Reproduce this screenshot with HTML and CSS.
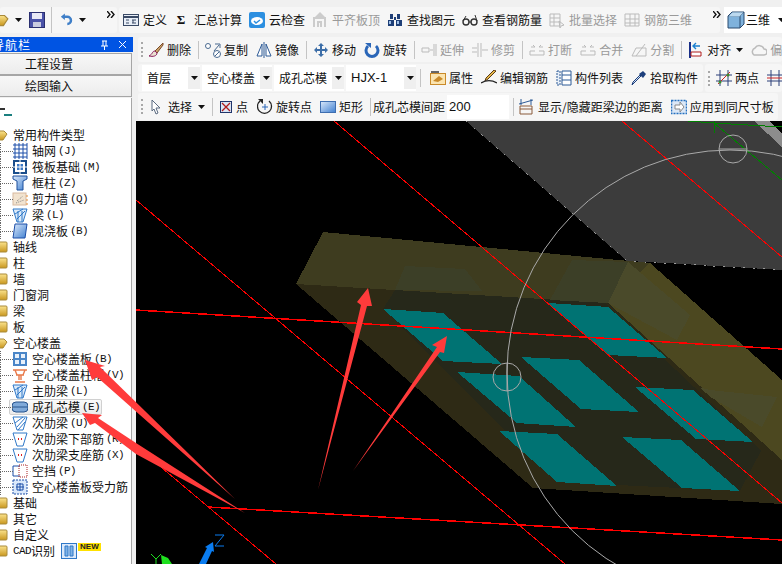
FILE: index.html
```html
<!DOCTYPE html>
<html lang="zh">
<head>
<meta charset="utf-8">
<title>绘图输入</title>
<link rel="stylesheet" href="styles.css">
</head>
<body>
<svg class="defs" aria-hidden="true">
  <defs>
    <linearGradient id="gold" x1="0" y1="0" x2="0" y2="1"><stop offset="0" stop-color="#fbe38c"/><stop offset="1" stop-color="#c9971f"/></linearGradient>
    <linearGradient id="blue" x1="0" y1="0" x2="1" y2="1"><stop offset="0" stop-color="#dbe9fb"/><stop offset="1" stop-color="#3f7fd0"/></linearGradient>
    <symbol id="grid" viewBox="0 0 16 16"><path d="M1 2h14M1 6h14M1 10h14M1 14h14M3 0v16M7 0v16M11 0v16M15 0v16" stroke="#1d4fa8" fill="none"/></symbol>
    <symbol id="raft" viewBox="0 0 16 16"><rect x="1" y="1" width="14" height="14" fill="#1a4e8c"/><rect x="3" y="3" width="10" height="10" fill="#fff"/><rect x="5" y="5" width="6" height="6" fill="#3b78c4"/><path d="M1 8h14M8 1v14" stroke="#fff"/></symbol>
    <symbol id="col" viewBox="0 0 16 16"><path d="M1 1h14v3l-4 2v9H5V6L1 4z" fill="url(#blue)" stroke="#1c4f9c"/></symbol>
    <symbol id="wall" viewBox="0 0 16 16"><rect x="1" y="2" width="13" height="12" fill="#f2e3cf" stroke="#d7b9a0"/><path d="M5 10l6-5M4 12l8-3" stroke="#888" stroke-dasharray="1 1"/><path d="M15 4v2M15 8v2M15 12v2" stroke="#e58a2e"/></symbol>
    <symbol id="beam" viewBox="0 0 16 16"><path d="M1 2h14l-4 13H5z" fill="#dcebfa" stroke="#2f78c8"/><path d="M3 7l8-5M5 12l8-8M6 4v11M10 4v11" stroke="#2f78c8"/></symbol>
    <symbol id="slab" viewBox="0 0 16 16"><path d="M3 1h12l-2 14H1z" fill="url(#blue)" stroke="#1d4fa8"/></symbol>
    <symbol id="vslab" viewBox="0 0 16 16"><rect x="1" y="1" width="14" height="14" fill="#4a86c8"/><path d="M3 3h4v4H3zM9 3h4v4H9zM3 9h4v4H3zM9 9h4v4H9z" fill="#e8f1fb"/></symbol>
    <symbol id="cap" viewBox="0 0 16 16"><path d="M1 3h14M4 8h8M7 8v5M9 8v5M3 15h10M3 3l2 5M13 3l-2 5" stroke="#e8794a" fill="none" stroke-width="1.4"/></symbol>
    <symbol id="core" viewBox="0 0 16 16"><rect x="0" y="3" width="16" height="10" rx="4" fill="#7fa9d9" stroke="#27548e"/><path d="M0 8h16" stroke="#27548e"/></symbol>
    <symbol id="sub" viewBox="0 0 16 16"><path d="M1 2h14l-4 13H5z" fill="#fff" stroke="#2f78c8"/><path d="M3 8l8-6M5 12l8-9M6 15l7-8" stroke="#2f78c8"/></symbol>
    <symbol id="subred" viewBox="0 0 16 16"><path d="M1 2h14l-4 13H5z" fill="#fff" stroke="#2f78c8"/><path d="M6 8h1M9 8h1" stroke="#d22" stroke-width="2"/></symbol>
    <symbol id="gap" viewBox="0 0 16 16"><path d="M8 3H1v10h7" fill="none" stroke="#1d4fa8"/><rect x="7" y="2" width="8" height="12" fill="none" stroke="#a22" stroke-dasharray="1 1"/></symbol>
    <symbol id="force" viewBox="0 0 16 16"><rect x="1" y="1" width="14" height="14" fill="#dbe9fb" stroke="#1d4fa8" stroke-dasharray="2 1"/><path d="M8 4v8M4 8h8M5 5h6v6H5z" stroke="#1d4fa8" fill="none"/></symbol>
    <symbol id="folder" viewBox="0 0 8 12"><rect x="-4" y="1" width="11" height="10" rx="1" fill="url(#gold)" stroke="#a98a3a"/></symbol>
    <symbol id="open" viewBox="0 0 8 12"><path d="M-4 2h8l3 3-4 6h-7z" fill="url(#gold)" stroke="#a98a3a"/></symbol>
    <symbol id="caret" viewBox="0 0 7 4"><path d="M0 0h7L3.500 4z" fill="#111"/></symbol>
    <symbol id="more" viewBox="0 0 9 7"><path d="M0 0l3 3.500-3 3.500M4 0l3 3.500-3 3.500" fill="none" stroke="#111" stroke-width="1.400"/></symbol>
    <symbol id="define" viewBox="0 0 16 16"><rect x=".5" y="2.500" width="15" height="11" fill="#e8eef7" stroke="#3a4a66"/><path d="M.5 5h15" stroke="#3a4a66" stroke-width="2"/><path d="M3 8h3M3 11h3M9 8h4M9 11h4M10 8v3" stroke="#3a4a66"/></symbol>
    <symbol id="cloud" viewBox="0 0 16 16"><rect width="16" height="16" rx="2" fill="#2c8fe0"/><ellipse cx="8" cy="9" rx="6" ry="4" fill="#fff"/><path d="M5 9l2 2 4-3" stroke="#2c8fe0" fill="none" stroke-width="1.500"/></symbol>
    <symbol id="align" viewBox="0 0 16 16"><path d="M8 0L3 5h10z" fill="#ccc"/><path d="M2 15V6h11v9M6 15v-5h3v5" fill="none" stroke="#ccc" stroke-width="2"/></symbol>
    <symbol id="find" viewBox="0 0 16 16"><path d="M3 2h3v5H3zM10 2h3v5h-3zM1 8h6v6H1zM9 8h6v6H9zM7 5h2v3H7z" fill="#1f3f77"/><path d="M2 9h2v3H2zM10 9h2v3h-2z" fill="#9fc0e8"/></symbol>
    <symbol id="glass" viewBox="0 0 16 16"><circle cx="4" cy="10" r="3" fill="none" stroke="#333" stroke-width="1.400"/><circle cx="12" cy="10" r="3" fill="none" stroke="#333" stroke-width="1.400"/><path d="M7 10h2M1 9l3-5M15 9l-2-6" stroke="#333"/></symbol>
    <symbol id="batch" viewBox="0 0 16 16"><path d="M1 2h10v12H1zM1 6h10M1 10h10M5 2v12M10 9l5 4-3 1-1 2z" fill="none" stroke="#bbb"/></symbol>
    <symbol id="rebar3d" viewBox="0 0 16 16"><path d="M1 2h14v12H1zM6 2v12M11 2v12M1 7h14M1 11h14" fill="none" stroke="#bbb"/></symbol>
    <symbol id="cube" viewBox="0 0 18 18"><path d="M1 5l4-4h12v12l-4 4H1z" fill="#7fb2dc" stroke="#2b4a6f"/><path d="M1 5h12v12M13 5l4-4" fill="none" stroke="#2b4a6f"/><path d="M1.500 5.500l4-4h11l-4 4z" fill="#bcd9ef"/></symbol>
    <symbol id="brush" viewBox="0 0 16 16"><path d="M15 1L7 9l2 2 6-8z" fill="#c9a26a" stroke="#7a4b2a"/><path d="M7 9c-3 0-2 3-6 5 4 1 8 0 8-3z" fill="#e9e0d0" stroke="#8d1f5e"/></symbol>
    <symbol id="copy" viewBox="0 0 16 16"><circle cx="3" cy="4" r="2.500" fill="#fff" stroke="#4a6a90"/><circle cx="12" cy="12" r="3.500" fill="#fff" stroke="#4a6a90"/><path d="M10 2h5v4M9 9l5-6M10 14l4-4" fill="none" stroke="#4a6a90"/></symbol>
    <symbol id="mirror" viewBox="0 0 16 16"><path d="M6 2L1 14h5zM10 2l5 12h-5z" fill="#fff" stroke="#2d5a96"/><path d="M8 0v16" stroke="#2d5a96"/></symbol>
    <symbol id="move" viewBox="0 0 16 16"><path d="M8 1l3 3H9v3h3V5l3 3-3 3V9H9v3h2l-3 3-3-3h2V9H4v2L1 8l3-3v2h3V4H5z" fill="#3d6ea8"/></symbol>
    <symbol id="rotate" viewBox="0 0 16 16"><path d="M4 4a6 6 0 1 0 8 0" fill="none" stroke="#2a66b8" stroke-width="3"/><path d="M1 1h6v5z" fill="#2a66b8"/></symbol>
    <symbol id="extend" viewBox="0 0 16 16"><path d="M1 6h7v4H1zM13 2v12M15 2v12M9 8h3" fill="none" stroke="#bbb"/></symbol>
    <symbol id="trim" viewBox="0 0 16 16"><path d="M6 1v14M9 1v14M0 6h5M0 10h5M10 8h6" fill="none" stroke="#bbb"/></symbol>
    <symbol id="brk" viewBox="0 0 16 16"><path d="M1 13h14M1 9h5M10 9h5M1 9v4M15 9v4M2 5h4l-2-2M14 5h-4l2-2" fill="none" stroke="#bbb"/></symbol>
    <symbol id="split" viewBox="0 0 16 16"><path d="M1 14l4-8h10v8zM5 14l9-12" fill="none" stroke="#bbb"/></symbol>
    <symbol id="alignr" viewBox="0 0 16 16"><path d="M2 0v16" stroke="#1a2f88" stroke-width="2"/><path d="M3 14h10v-4H3z" fill="#fff" stroke="#b01c1c"/><path d="M12 4H5m3-3L5 4l3 3" fill="none" stroke="#1a7fd0" stroke-width="1.400"/></symbol>
    <symbol id="offset" viewBox="0 0 16 16"><path d="M3 13a4 4 0 0 1 1-7 5 5 0 0 1 9 1 3 3 0 0 1 0 6z" fill="none" stroke="#bbb" stroke-width="1.500"/></symbol>
    <symbol id="prop" viewBox="0 0 16 16"><rect x=".5" y="3.500" width="15" height="11" fill="#fbe4b0" stroke="#c98a2a"/><path d="M1 1h8v2H1z" fill="#666"/><path d="M3 11l6-5 4 3-5 3z" fill="#c98a2a"/></symbol>
    <symbol id="editbar" viewBox="0 0 16 16"><path d="M15 1l-8 8-3 2 1-3 8-8z" fill="#e6b84a" stroke="#5a3a16"/><path d="M0 13c5-3 11-3 16 0" fill="none" stroke="#222" stroke-width="1.400"/></symbol>
    <symbol id="list" viewBox="0 0 16 16"><path d="M1 1h3v14H1z" fill="#e6eef8" stroke="#2d5a96" stroke-dasharray="2 1"/><path d="M6 1h9v14H6zM6 5h9M6 10h9" fill="#fff" stroke="#2d5a96"/></symbol>
    <symbol id="picker" viewBox="0 0 16 16"><path d="M10 6L3 13l-2 2 1-3 7-7z" fill="#cfe0f5" stroke="#1d3f7c"/><path d="M8 4l4 4 3-4-3-3z" fill="#1d3f7c"/></symbol>
    <symbol id="twopt" viewBox="0 0 16 16"><path d="M4 0v16M12 0v16M0 5h16M0 11h16" stroke="#2a3f78" fill="none"/><path d="M2 14L14 2" stroke="#c22"/><circle cx="4" cy="12" r="1.500" fill="#3c8c2c"/><circle cx="12" cy="5" r="1.500" fill="#3c8c2c"/></symbol>
    <symbol id="rows" viewBox="0 0 16 16"><path d="M4 0v16M12 0v16M0 5h16M0 11h16" stroke="#2a3f78" fill="none"/><path d="M0 8h16" stroke="#c22"/></symbol>
    <symbol id="cursor" viewBox="0 0 10 16"><path d="M1 1l8 8H5l2 5-2 1-2-5-2 2z" fill="#fff" stroke="#5a6a80"/></symbol>
    <symbol id="point" viewBox="0 0 12 12"><rect x=".5" y=".5" width="11" height="11" fill="#dce6f5" stroke="#20356b"/><path d="M2 2l8 8M10 2l-8 8" stroke="#b01c1c" stroke-width="1.300"/></symbol>
    <symbol id="rotpt" viewBox="0 0 16 16"><path d="M3 2a7 7 0 1 0 9 0" fill="none" stroke="#222" stroke-width="1.300"/><path d="M1 0h5v5z" fill="#222"/><path d="M8 5v6M5 8h6" stroke="#2a66b8"/></symbol>
    <symbol id="rect" viewBox="0 0 16 16"><rect x=".5" y="2.500" width="15" height="11" fill="url(#blue)" stroke="#3f6eb0"/></symbol>
    <symbol id="dist" viewBox="0 0 16 16"><path d="M2 7h12v8H2zM2 10h12" fill="none" stroke="#8a5a3a"/><path d="M1 5L15 1M3 0v6M13 0v6" stroke="#2d5a96" fill="none"/></symbol>
    <symbol id="apply" viewBox="0 0 16 16"><rect x=".5" y="1.500" width="15" height="13" fill="#dce8f7" stroke="#2470c0" stroke-width="1.500" stroke-dasharray="2 1"/><path d="M4 6h5V3l4 5-4 5v-3H4z" fill="#fff" stroke="#888"/></symbol>
    <symbol id="pin" viewBox="0 0 9 10"><path d="M2 1h5M3 1v5M6 1v5M1 6h7M4.500 6v4" stroke="#fff" fill="none"/></symbol>
    <symbol id="close" viewBox="0 0 9 9"><path d="M1 1l7 7M8 1L1 8" stroke="#fff"/></symbol>
    <symbol id="cadi" viewBox="0 0 16 16"><rect x=".5" y=".5" width="15" height="15" fill="#dbe9fb" stroke="#2f78c8"/><path d="M4 3h3v10H4zM9 3h3v10H9z" fill="#7fb2e6" stroke="#2f78c8"/></symbol>
  </defs>
</svg>

<header class="topbar">
  <div class="bar bar-quick">
    <svg class="i i-file"><use href="#open"/></svg>
    <svg class="caret"><use href="#caret"/></svg>
    <svg class="i i-save" viewBox="0 0 16 16"><rect x=".5" y=".5" width="15" height="15" fill="#4a52a8" stroke="#2a2f70"/><rect x="3" y="1" width="10" height="6" fill="#e8e8f5"/><rect x="4" y="10" width="8" height="5" fill="#c9cbe0"/></svg>
    <span class="sep"></span>
    <svg class="i i-undo" viewBox="0 0 16 16"><path d="M4 4h5a4 4 0 0 1 0 9" fill="none" stroke="#3f7fc8" stroke-width="3"/><path d="M6 0v8L1 4z" fill="#3f7fc8"/></svg>
    <svg class="caret caret-undo"><use href="#caret"/></svg>
    <svg class="more more-quick"><use href="#more"/></svg>
  </div>
  <div class="bar bar-main">
    <span class="tool"><svg class="i"><use href="#define"/></svg>定义</span>
    <span class="tool tool-sigma"><b class="sigma">Σ</b>汇总计算</span>
    <span class="tool"><svg class="i"><use href="#cloud"/></svg>云检查</span>
    <span class="tool off"><svg class="i"><use href="#align"/></svg>平齐板顶</span>
    <span class="tool"><svg class="i"><use href="#find"/></svg>查找图元</span>
    <span class="tool"><svg class="i"><use href="#glass"/></svg>查看钢筋量</span>
    <span class="tool off"><svg class="i"><use href="#batch"/></svg>批量选择</span>
    <span class="tool off"><svg class="i"><use href="#rebar3d"/></svg>钢筋三维</span>
    <svg class="more more-main"><use href="#more"/></svg>
  </div>
  <div class="view3d">
    <svg class="i i-cube"><use href="#cube"/></svg><span>三维</span>
    <svg class="caret caret-view"><use href="#caret"/></svg>
  </div>
</header>

<div class="main">
  <aside class="side">
    <div class="side-title"><span class="side-name">导航栏</span><svg class="pin"><use href="#pin"/></svg><svg class="close"><use href="#close"/></svg></div>
    <div class="side-btn">工程设置</div>
    <div class="side-btn">绘图输入</div>
    <div class="tree">
      <div class="tree-head"><span class="h1"></span><span class="h2"></span></div>
      <div class="row"><svg class="fold"><use href="#open"/></svg>常用构件类型</div>
      <div class="row leaf"><svg class="i"><use href="#grid"/></svg>轴网<span class="key">(J)</span></div>
      <div class="row leaf"><svg class="i"><use href="#raft"/></svg>筏板基础<span class="key">(M)</span></div>
      <div class="row leaf"><svg class="i"><use href="#col"/></svg>框柱<span class="key">(Z)</span></div>
      <div class="row leaf"><svg class="i"><use href="#wall"/></svg>剪力墙<span class="key">(Q)</span></div>
      <div class="row leaf"><svg class="i"><use href="#beam"/></svg>梁<span class="key">(L)</span></div>
      <div class="row leaf"><svg class="i"><use href="#slab"/></svg>现浇板<span class="key">(B)</span></div>
      <div class="row"><svg class="fold"><use href="#folder"/></svg>轴线</div>
      <div class="row"><svg class="fold"><use href="#folder"/></svg>柱</div>
      <div class="row"><svg class="fold"><use href="#folder"/></svg>墙</div>
      <div class="row"><svg class="fold"><use href="#folder"/></svg>门窗洞</div>
      <div class="row"><svg class="fold"><use href="#folder"/></svg>梁</div>
      <div class="row"><svg class="fold"><use href="#folder"/></svg>板</div>
      <div class="row"><svg class="fold"><use href="#open"/></svg>空心楼盖</div>
      <div class="row leaf"><svg class="i"><use href="#vslab"/></svg>空心楼盖板<span class="key">(B)</span></div>
      <div class="row leaf"><svg class="i"><use href="#cap"/></svg>空心楼盖柱帽<span class="key">(V)</span></div>
      <div class="row leaf"><svg class="i"><use href="#beam"/></svg>主肋梁<span class="key">(L)</span></div>
      <div class="row leaf"><span class="sel"><svg class="i"><use href="#core"/></svg>成孔芯模<span class="key">(E)</span></span></div>
      <div class="row leaf"><svg class="i"><use href="#sub"/></svg>次肋梁<span class="key">(U)</span></div>
      <div class="row leaf"><svg class="i"><use href="#subred"/></svg>次肋梁下部筋<span class="key">(R)</span></div>
      <div class="row leaf"><svg class="i"><use href="#subred"/></svg>次肋梁支座筋<span class="key">(X)</span></div>
      <div class="row leaf"><svg class="i"><use href="#gap"/></svg>空挡<span class="key">(P)</span></div>
      <div class="row leaf"><svg class="i"><use href="#force"/></svg>空心楼盖板受力筋</div>
      <div class="row"><svg class="fold"><use href="#folder"/></svg>基础</div>
      <div class="row"><svg class="fold"><use href="#folder"/></svg>其它</div>
      <div class="row"><svg class="fold"><use href="#folder"/></svg>自定义</div>
      <div class="row"><svg class="fold"><use href="#folder"/></svg><span class="key key-cad">CAD</span>识别<svg class="i i-cad"><use href="#cadi"/></svg><span class="new">NEW</span></div>
    </div>
  </aside>

  <section class="work">
    <div class="bar tb tb1">
      <span class="grip"></span>
      <span class="tool"><svg class="i"><use href="#brush"/></svg>删除</span><span class="sep"></span>
      <span class="tool"><svg class="i"><use href="#copy"/></svg>复制</span>
      <span class="tool"><svg class="i"><use href="#mirror"/></svg>镜像</span><span class="sep"></span>
      <span class="tool"><svg class="i"><use href="#move"/></svg>移动</span>
      <span class="tool"><svg class="i"><use href="#rotate"/></svg>旋转</span><span class="sep"></span>
      <span class="tool off"><svg class="i"><use href="#extend"/></svg>延伸</span>
      <span class="tool off"><svg class="i"><use href="#trim"/></svg>修剪</span><span class="sep"></span>
      <span class="tool off"><svg class="i"><use href="#brk"/></svg>打断</span>
      <span class="tool off"><svg class="i"><use href="#brk"/></svg>合并</span>
      <span class="tool off"><svg class="i"><use href="#split"/></svg>分割</span><span class="sep"></span>
      <span class="tool"><svg class="i"><use href="#alignr"/></svg>对齐<svg class="caret caret-in"><use href="#caret"/></svg></span>
      <span class="tool off"><svg class="i"><use href="#offset"/></svg>偏移</span>
    </div>
    <div class="tb2">
      <div class="bar tb2-a">
        <span class="combo c1">首层<i class="drop"><svg class="caret"><use href="#caret"/></svg></i></span>
        <span class="combo">空心楼盖<i class="drop"><svg class="caret"><use href="#caret"/></svg></i></span>
        <span class="combo">成孔芯模<i class="drop"><svg class="caret"><use href="#caret"/></svg></i></span>
        <span class="combo latin">HJX-1<i class="drop"><svg class="caret"><use href="#caret"/></svg></i></span>
        <span class="sep sep-c"></span>
        <span class="tool"><svg class="i"><use href="#prop"/></svg>属性</span>
        <span class="tool"><svg class="i"><use href="#editbar"/></svg>编辑钢筋</span>
        <span class="tool"><svg class="i"><use href="#list"/></svg>构件列表</span>
        <span class="tool"><svg class="i"><use href="#picker"/></svg>拾取构件</span>
      </div>
      <div class="bar tb2-b">
        <span class="grip"></span>
        <span class="tool"><svg class="i"><use href="#twopt"/></svg>两点</span>
        <svg class="i i-last"><use href="#rows"/></svg>
      </div>
    </div>
    <div class="bar tb tb3">
      <span class="grip"></span>
      <svg class="i i-cursor"><use href="#cursor"/></svg>
      <span class="tool tool-sel">选择<svg class="caret caret-sel"><use href="#caret"/></svg></span><span class="sep"></span>
      <span class="tool tool-pt"><svg class="i i-point"><use href="#point"/></svg>点</span>
      <span class="tool"><svg class="i"><use href="#rotpt"/></svg>旋转点</span>
      <span class="tool"><svg class="i"><use href="#rect"/></svg>矩形</span><span class="sep sep-label"></span>
      <span class="label">成孔芯模间距</span><span class="input">200</span><span class="sep sep-input"></span>
      <span class="tool tool-dist"><svg class="i"><use href="#dist"/></svg>显示/隐藏距梁边的距离</span>
      <span class="tool"><svg class="i"><use href="#apply"/></svg>应用到同尺寸板</span>
    </div>
    <svg class="canvas" viewBox="136 121 646 443" shape-rendering="crispEdges">
      <rect x="136" y="121" width="646" height="443" fill="#000"/>
      <polygon points="466,121 754,121 782,147 782,270 649,262 627,261" fill="#3c3c3c"/>
      <polygon points="754,121 770,121 782,134 782,147" fill="#8c8c8c"/>
      <polyline points="466,121 627,261 782,270" fill="none" stroke="#9a9a9a" stroke-dasharray="2 8"/>
      <polygon points="323,232 296,284 533,488 782,504 782,450 608,303 650,263" fill="#2e2a15"/>
      <polygon points="323,232 296,284 608,303 650,263" fill="#3e3c1f"/>
      <polygon points="650,263 608,303 782,460 782,380" fill="#4c4820"/>
      <polygon points="628,262 690,315 677,340 608,303" fill="#4a4a2a"/>
      <polygon points="710,390 777,397 762,427 690,385" fill="#4a4a2a"/>
      <polygon points="395,290 608,303 763,447 740,491 557,482 383,309" fill="#26281a"/>
      <polygon points="405,266 465,269 482,291 395,290" fill="#3c3f27"/>
      <polygon points="572,260 628,262 608,303 550,300" fill="#3c3f27"/>
      <polygon points="605,303 608,304 782,462 782,470" fill="#2e2a15"/>
      <g fill="#007373">
        <polygon points="383,309 443,313 502,364 443,361"/>
        <polygon points="548,303 608,307 667,358 608,355"/>
        <polygon points="521,357 579,360 639,412 581,409"/>
        <polygon points="457,372 519,376 576,427 517,423"/>
        <polygon points="635,387 693,390 753,442 696,439"/>
        <polygon points="499,431 557,434 617,486 557,482"/>
        <polygon points="622,437 681,440 740,491 682,488"/>
      </g>
      <g fill="none" stroke="#f00">
        <line x1="136" y1="200" x2="565" y2="564"/>
        <line x1="136" y1="446" x2="276" y2="564"/>
        <line x1="334" y1="121" x2="782" y2="503"/>
        <line x1="622" y1="121" x2="782" y2="257"/>
        <line x1="136" y1="310" x2="782" y2="349" stroke-width="1.500"/>
        <line x1="208" y1="507" x2="782" y2="540" stroke-width="1.500"/>
      </g>
      <g fill="none" stroke="#008000">
        <polyline points="688,121 714,123 782,127"/>
        <line x1="714" y1="123" x2="782" y2="180"/>
        <line x1="714" y1="121" x2="714" y2="133"/>
      </g>
      <g fill="none" stroke="#a9a9a9" shape-rendering="auto">
        <circle cx="730" cy="373" r="223"/>
        <circle cx="733" cy="149" r="14"/>
        <circle cx="507" cy="377" r="14"/>
        <line x1="719" y1="149" x2="747" y2="149"/>
        <line x1="507" y1="363" x2="507" y2="391"/>
      </g>
      <g shape-rendering="auto">
        <path d="M199 564l8-16-2-1 8-5 1 10-2-1-6 13z" fill="#0a7cf0"/>
        <path d="M215 535h9l-9 11h9" fill="none" stroke="#0a7cf0"/>
        <path d="M161 555l7 3 4 6h-10z" fill="#1ee01e"/>
        <path d="M151 554l5 5 5-5M156 559v5" fill="none" stroke="#1ee01e"/>
      </g>
    </svg>
  </section>
</div>

<svg class="notes" viewBox="0 0 782 564" aria-hidden="true">
  <g fill="#ff3b3b">
    <polygon points="318,490 361,305 357,302 368,288 372,306 367,306"/>
    <polygon points="353,471 437,347 432,345 447,336 444,353 440,352"/>
    <polygon points="235,499 97,377 92,380 85,360 105,366 100,367"/>
    <polygon points="245,513 136,454 95,423 90,425 82,413 102,415 98,418 136,443"/>
  </g>
</svg>
</body>
</html>
```

FILE: styles.css
```css
* { box-sizing: border-box; }
html, body { margin: 0; padding: 0; }
body {
  position: relative;
  width: 782px;
  height: 564px;
  overflow: hidden;
  display: flex;
  flex-direction: column;
  background: #f0f0f0;
  color: #111;
  font: 12px/16px "Noto Sans CJK SC", "Liberation Sans", sans-serif;
}
.defs { position: absolute; width: 0; height: 0; }
svg { display: block; flex: none; }
.i { width: 16px; height: 16px; }

.bar {
  display: flex;
  align-items: center;
  background: #f6f6f6;
  border-radius: 3px;
  white-space: nowrap;
}
.tool { display: inline-flex; align-items: center; gap: 3px; flex: none; }
.off { color: #9a9a9a; }
.caret { width: 7px; height: 4px; }
.more { width: 9px; height: 7px; }
.sep { width: 1px; height: 18px; background: #c4c4c4; flex: none; margin: 0 -2px 0 -1px; }

.topbar { height: 37px; padding-top: 7px; display: flex; flex: none; }
.bar-quick { width: 117px; flex: none; height: 26px; overflow: hidden; }
.i-file { width: 9px; height: 16px; }
.bar-quick .caret { margin-left: 6px; }
.i-save { margin-left: 7px; }
.bar-quick .sep { height: 26px; margin: 0 0 0 6px; }
.i-undo { margin-left: 8px; width: 13px; }
.caret-undo { margin-left: 10px; }
.more-quick { margin: -12px 0 0 21px; }
.bar-main { margin-left: 2px; width: 601px; flex: none; height: 26px; padding-left: 4px; gap: 7px; }
.bar-main .tool { gap: 4px; }
.bar-main .tool-sigma { gap: 8px; margin-left: 2px; }
.sigma { font: bold 13px "Liberation Serif", serif; width: 10px; text-align: center; }
.more-main { margin: -12px 0 0 14px; }
.view3d {
  margin-left: 4px;
  flex: 1;
  min-width: 0;
  overflow: hidden;
  height: 26px;
  padding-left: 3px;
  background: #fff;
  display: flex;
  align-items: center;
  gap: 1px;
  white-space: nowrap;
}
.i-cube { width: 18px; height: 18px; }
.caret-view { margin-left: 7px; }

.main { flex: 1; min-height: 0; display: flex; }
.side { width: 136px; flex: none; display: flex; flex-direction: column; padding-right: 4px; }
.side-title {
  height: 15px;
  margin-right: -1px;
  margin-bottom: 1px;
  background: #0054e3;
  color: #fff;
  display: flex;
  align-items: center;
  overflow: hidden;
}
.side-name { margin-left: -8px; width: 108px; letter-spacing: 1px; }
.side-title .pin { width: 9px; height: 10px; }
.side-title .close { width: 9px; height: 9px; margin-left: 9px; }
.side-btn {
  height: 22px;
  flex: none;
  border: 1px solid #a6a6a6;
  border-left: 0;
  background: linear-gradient(#f7f7f7, #ececec);
  padding-left: 25px;
  line-height: 20px;
}
.tree {
  flex: 1;
  min-height: 0;
  margin-top: 1px;
  background: #fff;
  border-right: 1px solid #a6a6a6;
  overflow: hidden;
  padding-top: 10px;
  white-space: nowrap;
}
.tree-head { height: 19px; position: relative; }
.h1, .h2 { position: absolute; height: 2px; }
.h1 { left: 0; top: 0; width: 5px; background: #333; }
.h2 { left: 4px; top: 6px; width: 8px; background: #1a7f7f; }
.row { height: 16px; display: flex; align-items: center; position: relative; }
.fold { width: 8px; height: 12px; margin-right: 5px; }
.leaf { padding-left: 12px; }
.leaf .i { margin-right: 4px; }
.leaf::before {
  content: "";
  position: absolute;
  left: 0;
  top: 0;
  width: 12px;
  height: 8px;
  border-left: 1px dotted #666;
  border-bottom: 1px dotted #666;
}
.leaf::after {
  content: "";
  position: absolute;
  left: 0;
  top: 8px;
  height: 8px;
  border-left: 1px dotted #666;
}
.key { font: 11px/16px "Liberation Mono", monospace; letter-spacing: -.6px; margin-left: 2px; color: #111; }
.key-cad { margin: 0; }
.sel {
  border: 1px solid #d0d0d0;
  border-radius: 2px;
  background: linear-gradient(#fafafa, #ececec);
  height: 16px;
  width: 93px;
  display: flex;
  align-items: center;
  margin-left: -3px;
  padding-left: 2px;
}
.i-cad { margin-left: 6px; }
.new {
  font: bold 8px/8px "Liberation Sans", sans-serif;
  background: #ffe100;
  color: #222;
  height: 8px;
  padding: 0 2px;
  margin: -8px 0 0 1px;
}

.work { flex: 1; min-width: 0; display: flex; flex-direction: column; padding-left: 1px; overflow: hidden; }
.tb { height: 25px; gap: 8px; flex: none; }
.grip { width: 2px; height: 15px; margin-left: 3px; border-left: 2px dotted #a8a8a8; flex: none; }
.tb1 { margin-left: 1px; margin-bottom: 2px; }
.tb1 .grip { margin-right: -3px; }
.caret-in { margin-left: 2px; }

.tb2 { height: 28px; flex: none; display: flex; gap: 2px; margin-left: 1px; }
.tb2-a { width: 565px; padding-left: 4px; flex: none; }
.combo { display: flex; align-items: center; background: #fff; height: 26px; padding-left: 5px; margin-right: 2px; flex: none; justify-content: space-between; width: 70px; }
.c1 { width: 58px; }
.latin { font-family: "Liberation Sans", sans-serif; font-size: 13px; }
.drop { width: 12px; height: 22px; background: #efefef; display: flex; align-items: center; justify-content: center; }
.tb2-a .sep-c { margin: 0 9px 0 2px; }
.tb2-a .tool { margin-right: 8px; }
.tb2-a .tool:first-of-type { margin-right: 7px; }
.tb2-b { flex: 1; gap: 6px; overflow: hidden; }
.i-last { margin-left: 2px; }

.tb3 { margin: 1px 4px 0 1px; height: 27px; }
.i-cursor { width: 10px; height: 16px; margin-right: -1px; }
.caret-sel { margin-left: 3px; }
.tool-pt { gap: 4px; margin: 0 1px 0 1px; }
.i-point { width: 12px; height: 12px; }
.tb3 .sep-label { margin: 0 -6px 0 -1px; }
.label { margin-right: -6px; flex: none; }
.tb3 .sep-input { margin: 0 -4px 0 -4px; }
.input { background: #fff; width: 62px; height: 24px; line-height: 24px; font-family: "Liberation Sans", sans-serif; font-size: 13px; padding-left: 2px; flex: none; }
.tool-dist { gap: 4px; }

.canvas { width: 646px; height: 443px; margin-left: -1px; margin-top: 1px; flex: none; }
.notes { position: absolute; left: 0; top: 0; width: 782px; height: 564px; pointer-events: none; }
```
